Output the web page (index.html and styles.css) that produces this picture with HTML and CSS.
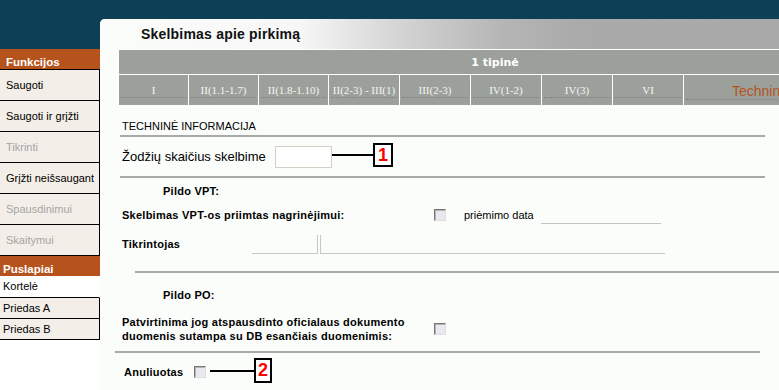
FILE: index.html
```html
<!DOCTYPE html>
<html lang="lt">
<head>
<meta charset="UTF-8" />
<title>Skelbimas apie pirkimą</title>
<link rel="stylesheet" href="styles.css">
</head>
<body>

<div class="page">
  <aside class="side">
    <div class="side-top"></div>
    <div class="side-head">Funkcijos</div>
    <ul class="side-list side-list--fn">
      <li>Saugoti</li>
      <li>Saugoti ir grįžti</li>
      <li class="off">Tikrinti</li>
      <li>Grįžti neišsaugant</li>
      <li class="off">Spausdinimui</li>
      <li class="off">Skaitymui</li>
    </ul>
    <div class="side-head side-head--pages">Puslapiai</div>
    <ul class="side-list side-list--pages">
      <li class="current">Kortelė</li>
      <li>Priedas A</li>
      <li>Priedas B</li>
    </ul>
  </aside>

  <div class="main">
    <div class="main-top"></div>
    <section class="panel">
      <h1 class="title">Skelbimas apie pirkimą</h1>

      <div class="tabs">
        <div class="tabs-head">1 tipinė</div>
        <div class="tab"><span>I</span></div>
        <div class="tab"><span>II(1.1-1.7)</span></div>
        <div class="tab"><span>II(1.8-1.10)</span></div>
        <div class="tab"><span>II(2-3) - III(1)</span></div>
        <div class="tab"><span>III(2-3)</span></div>
        <div class="tab"><span>IV(1-2)</span></div>
        <div class="tab"><span>IV(3)</span></div>
        <div class="tab"><span>VI</span></div>
        <div class="tab tab--active"><span>Techninė</span></div>
      </div>

      <div class="form">
        <div class="sec-title">TECHNINĖ INFORMACIJA</div>

        <div class="row row--words">
          <div class="label-words">Žodžių skaičius skelbime</div>
          <div class="input"></div>
          <div class="mark">
            <div class="mark-line"></div>
            <div class="mark-box">1</div>
          </div>
        </div>

        <div class="sub-head">Pildo VPT:</div>

        <div class="row row--vpt">
          <div class="label label-wide">Skelbimas VPT-os priimtas nagrinėjimui:</div>
          <div class="check"></div>
          <div class="date-label">priėmimo data</div>
          <div class="line-input"></div>
        </div>

        <div class="row row--tik">
          <div class="label label-tik">Tikrintojas</div>
          <div class="field-a"></div>
          <div class="field-b"></div>
        </div>

        <div class="rule-wide"></div>

        <div class="sub-head sub-head--po">Pildo PO:</div>

        <div class="row row--confirm">
          <div class="label label-wide">Patvirtinima jog atspausdinto oficialaus dokumento duomenis sutampa su DB esančiais duomenimis:</div>
          <div class="check"></div>
        </div>

        <div class="rule-mid"></div>

        <div class="row row--cancel">
          <div class="label label-cancel">Anuliuotas</div>
          <div class="check"></div>
          <div class="mark mark--two">
            <div class="mark-line"></div>
            <div class="mark-box">2</div>
          </div>
        </div>
      </div>
    </section>
  </div>
</div>

</body>
</html>
```

FILE: styles.css
```css
body {
  margin: 0;
  background: #fbfdfb;
  color: #000;
  font-family: "Liberation Sans", Arial, sans-serif;
  font-size: 11px;
  overflow: hidden;
}
.page {
  display: flex;
  height: 390px;
}

/* kairys meniu */
.side {
  width: 100px;
  flex: none;
  background: #fff;
}
.side-top {
  height: 49px;
  background: #0d3f55;
}
.side-head {
  height: 20px;
  box-sizing: border-box;
  padding: 6px 0 0 6px;
  line-height: 14px;
  background: #b6531d;
  color: #fff;
  font-weight: bold;
  font-size: 11.5px;
}
.side-head--pages {
  padding-left: 3px;
}
.side-list {
  list-style: none;
  margin: 0;
  padding: 0;
}
.side-list li {
  background: #f3eee7;
  border-right: 1px solid #000;
  border-bottom: 1px solid #000;
  padding-left: 6px;
}
.side-list--fn {
  border-top: 1px solid #000;
}
.side-list--fn li {
  height: 30px;
  line-height: 30px;
}
.side-list--pages li {
  height: 20px;
  line-height: 20px;
  padding-left: 3px;
}
.side-list li.current {
  height: 21px;
  line-height: 21px;
  background: #fff;
  border-right-color: #fff;
}
.side-list li.off {
  color: #a5a5a5;
}

/* pagrindinis */
.main {
  flex: 1;
  min-width: 0;
  display: flex;
  flex-direction: column;
  background: #0d3f55;
}
.main-top {
  height: 19px;
  flex: none;
}
.panel {
  flex: 1;
  background: #fbfdfb;
  border-top-left-radius: 5px;
  overflow: hidden;
}
.title {
  margin: 0;
  height: 30px;
  line-height: 30px;
  padding-left: 41px;
  font-size: 14px;
  font-weight: bold;
  letter-spacing: 0.2px;
  color: #111;
  background: linear-gradient(to right, #fbfdfb 0, #f6f7f6 200px, #d4d4d4 300px, #b6b6b6 400px, #aaaaaa 480px, #a9a9a9 100%);
}

/* skirtukai */
.tabs {
  margin-left: 19px;
  width: max-content;
  display: grid;
  grid-template-columns: 69px 69px 69px 70px 70px 70px 70px 70px 152px;
  grid-template-rows: 24px 30px;
  gap: 1px;
  background: #fff;
  border-top: 1px solid #fff;
}
.tabs-head {
  grid-column: 1 / -1;
  background: #9ba19a;
  color: #fff;
  font-family: "DejaVu Sans", Verdana, sans-serif;
  font-weight: bold;
  font-size: 11px;
  display: flex;
  align-items: center;
  justify-content: center;
  padding-left: 35px;
}
.tab {
  background: #9ba19a;
  display: flex;
  align-items: center;
}
.tab span {
  flex: 1;
  margin: 0 2px;
  padding-top: 2px;
  line-height: 13px;
  text-align: center;
  white-space: nowrap;
  border-bottom: 1px dotted #7b8179;
  font-family: "Liberation Serif", "Times New Roman", serif;
  color: #f4f4f4;
}
.tab--active span {
  font-family: "Liberation Sans", Arial, sans-serif;
  font-size: 14px;
  line-height: 16px;
  color: #b6531d;
}

/* forma */
.form {
  margin-left: 20px;
  width: 645px;
}
.sec-title {
  height: 32px;
  box-sizing: border-box;
  padding: 14px 0 0 2px;
  line-height: 14px;
  border-bottom: 2px solid #a9a9a9;
}
.row {
  display: flex;
  align-items: center;
  padding-left: 2px;
}
.label {
  font-weight: bold;
  letter-spacing: 0.25px;
}
.row--words {
  height: 39px;
  border-bottom: 2px solid #a9a9a9;
}
.label-words {
  width: 153px;
  font-size: 13px;
}
.input {
  box-sizing: border-box;
  width: 57px;
  height: 22px;
  background: #fff;
  border: 1px solid #d6cfc6;
}
.mark {
  display: flex;
  align-items: center;
  margin-bottom: 4px;
}
.mark-line {
  width: 41px;
  height: 2px;
  background: #000;
}
.mark-box {
  box-sizing: border-box;
  width: 20px;
  height: 24px;
  border: 2px solid #000;
  background: #fff;
  color: #f00;
  font-size: 18px;
  font-weight: bold;
  line-height: 20px;
  text-align: center;
}
.mark--two {
  margin-left: 4px;
  margin-bottom: 3px;
}
.mark--two .mark-line {
  width: 44px;
}
.mark--two .mark-box {
  width: 18px;
  height: 25px;
  line-height: 21px;
}
.sub-head {
  height: 26px;
  line-height: 26px;
  padding-left: 43px;
  font-weight: bold;
  letter-spacing: 0.25px;
}
.sub-head--po {
  height: 42px;
  box-sizing: border-box;
  padding-top: 2px;
  line-height: 40px;
}
.row--vpt {
  height: 21px;
}
.label-wide {
  width: 312px;
  line-height: 14px;
}
.check {
  flex: none;
  box-sizing: border-box;
  width: 12px;
  height: 12px;
  border: 1px solid;
  border-color: #767676 #dedede #dedede #767676;
  background: #e8e8ee;
  box-shadow: inset 1px 1px 0 #b4b4b4;
}
.date-label {
  margin-left: 18px;
}
.line-input {
  box-sizing: border-box;
  margin-left: 7px;
  width: 120px;
  height: 18px;
  border-bottom: 1px solid #c4c4c4;
}
.row--tik {
  height: 38px;
}
.label-tik {
  width: 130px;
}
.field-a,
.field-b {
  box-sizing: border-box;
  height: 19px;
  border-bottom: 1px solid #c8c8c8;
}
.field-a {
  width: 66px;
  border-right: 1px solid #c8c8c8;
}
.field-b {
  margin-left: 2px;
  width: 345px;
  border-left: 1px solid #c8c8c8;
}
.rule-wide {
  margin: 8px -20px 0 15px;
  border-top: 2px solid #a9a9a9;
}
.rule-mid {
  margin: 8px 0 0 -5px;
  width: 645px;
  border-top: 2px solid #a9a9a9;
}
.row--cancel {
  height: 38px;
  padding-left: 4px;
}
.label-cancel {
  width: 70px;
}
```
